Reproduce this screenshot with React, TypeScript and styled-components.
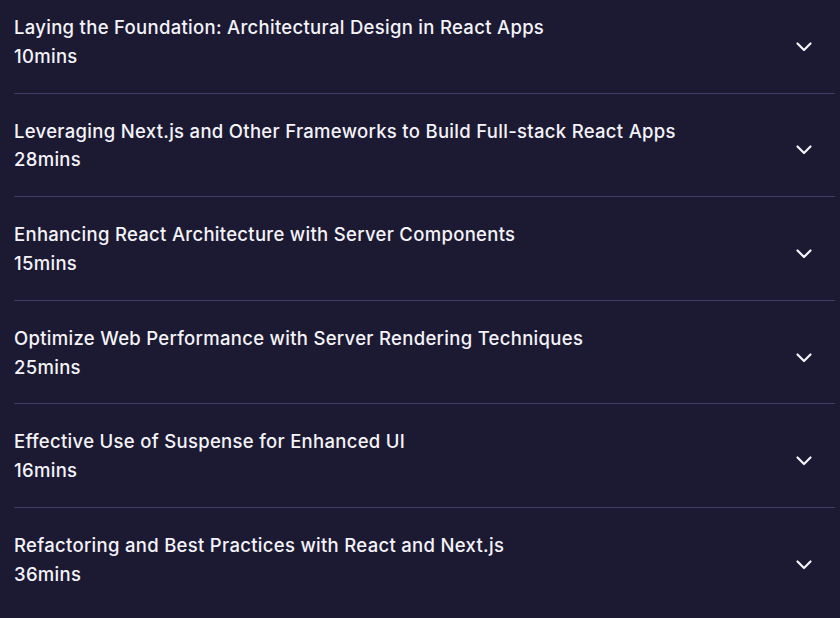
import React from "react";
import styled, { createGlobalStyle } from "styled-components";

const Global = createGlobalStyle`
  html, body {
    margin: 0;
    padding: 0;
    background: #1c1a33;
  }
  body {
    font-family: Inter, "Noto Sans", sans-serif;
    color: #f4f3f8;
  }
`;

const List = styled.ul`
  list-style: none;
  margin: 0;
  padding: 0 5px 0 14px;
  background: #1c1a33;
  min-height: 618px;
  box-sizing: border-box;
`;

const Item = styled.li<{ $last?: boolean }>`
  border-bottom: ${(p) => (p.$last ? "none" : "1px solid #3f3d63")};
  &:first-child > button {
    padding-top: 13px;
  }
`;

const Header = styled.button`
  display: flex;
  align-items: center;
  justify-content: space-between;
  width: 100%;
  background: none;
  border: none;
  color: inherit;
  text-align: left;
  padding: 23px 19px 22px 0;
  cursor: pointer;
  font-family: inherit;
`;

const Text = styled.div`
  display: flex;
  flex-direction: column;
`;

const Title = styled.span`
  font-size: 18.5px;
  font-weight: 500;
  line-height: 28.8px;
  letter-spacing: 0.3px;
`;

const Duration = styled.span`
  font-size: 18.5px;
  font-weight: 500;
  line-height: 28.8px;
  letter-spacing: 0.3px;
`;

const Chevron = styled.svg`
  flex: none;
  width: 24px;
  height: 24px;
  margin-top: 10px;
`;

const lessons = [
  { title: "Laying the Foundation: Architectural Design in React Apps", mins: 10 },
  { title: "Leveraging Next.js and Other Frameworks to Build Full-stack React Apps", mins: 28 },
  { title: "Enhancing React Architecture with Server Components", mins: 15 },
  { title: "Optimize Web Performance with Server Rendering Techniques", mins: 25 },
  { title: "Effective Use of Suspense for Enhanced UI", mins: 16 },
  { title: "Refactoring and Best Practices with React and Next.js", mins: 36 },
];

export default function App() {
  return (
    <>
      <Global />
      <List>
        {lessons.map((l, i) => (
          <Item key={l.title} $last={i === lessons.length - 1}>
            <Header>
              <Text>
                <Title>{l.title}</Title>
                <Duration>{l.mins}mins</Duration>
              </Text>
              <Chevron viewBox="0 0 24 24" fill="none" stroke="currentColor" strokeWidth={2.2} strokeLinecap="round" strokeLinejoin="round">
                <path d="m5.5 8.5 6.5 6.5 6.5-6.5" />
              </Chevron>
            </Header>
          </Item>
        ))}
      </List>
    </>
  );
}
